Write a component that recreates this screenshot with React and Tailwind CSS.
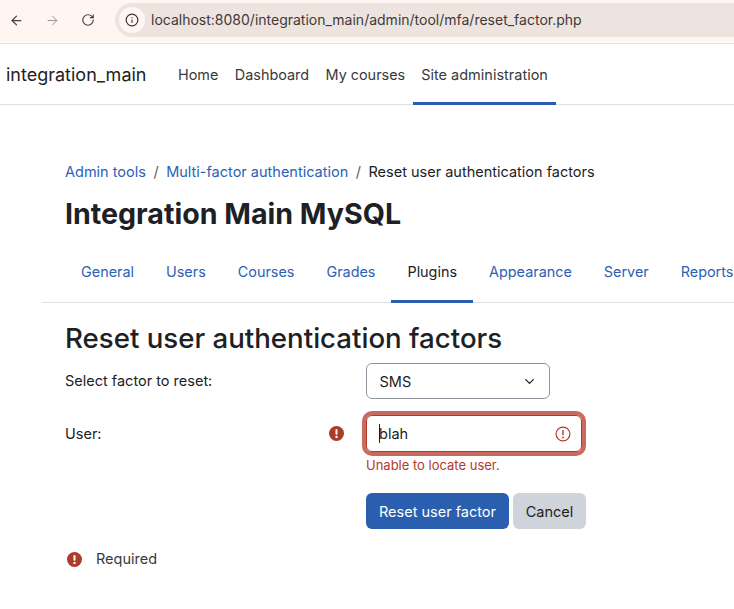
import React from "react";
import { ArrowLeft, ArrowRight, RotateCw, Info, ChevronDown } from "lucide-react";

function Bang({ className }) {
  return (
    <svg viewBox="0 0 16 16" className={className}>
      <circle cx="8" cy="8" r="8" fill="#ab3b2a" />
      <rect x="6.9" y="3.2" width="2.2" height="6" rx="1" fill="#fff" />
      <circle cx="8" cy="11.6" r="1.25" fill="#fff" />
    </svg>
  );
}

function BangOutline({ className }) {
  return (
    <svg viewBox="0 0 16 16" className={className}>
      <circle cx="8" cy="8" r="6.9" fill="none" stroke="#b3392a" strokeWidth="1.2" />
      <rect x="7.3" y="3.9" width="1.4" height="5.4" rx="0.6" fill="#b3392a" />
      <circle cx="8" cy="11.4" r="0.95" fill="#b3392a" />
    </svg>
  );
}

export default function App() {
  const tabs = ["General", "Users", "Courses", "Grades", "Plugins", "Appearance", "Server", "Reports"];
  return (
    <div className="w-[734px] h-[609px] overflow-hidden bg-white font-['Inter',sans-serif] text-[14.4px] text-[#1d2125]">
      <div className="h-[44px] bg-[#fff5f1] border-b border-[#f0dfd8] flex items-start">
        <div className="flex items-center h-[40px] pl-[9px] gap-[21px] text-[#4a423f]">
          <ArrowLeft size={15} strokeWidth={2} />
          <ArrowRight size={15} strokeWidth={1.6} className="text-[#9c9592]" />
          <RotateCw size={14} strokeWidth={2} />
        </div>
        <div className="ml-[20px] mt-[3px] flex-1 h-[34px] bg-[#eee4df] rounded-l-full flex items-center pl-[4px]">
          <div className="w-[26px] h-[26px] rounded-full bg-[#fff5f1] flex items-center justify-center text-[#3b3533]">
            <Info size={14} strokeWidth={2} />
          </div>
          <span className="ml-[6px] text-[14px] leading-none text-[#3f3a38]">localhost:8080/integration_main/admin/tool/mfa/reset_factor.php</span>
        </div>
      </div>

      <nav className="h-[61px] border-b border-[#dee2e6] flex items-stretch pl-[6px] whitespace-nowrap">
        <div className="flex items-center text-[18px] w-[166px]">integration_main</div>
        <div className="flex items-center px-[6px] pt-[1px] text-[#373a3c]">Home</div>
        <div className="flex items-center px-[10.5px] pt-[1px] text-[#373a3c]">Dashboard</div>
        <div className="flex items-center px-[6px] pt-[1px] text-[#373a3c]">My courses</div>
        <div className="flex items-center ml-[2px] pl-[8px] pr-[8px] pt-[3px] text-[14.5px] text-[#373a3c] border-b-[3px] border-[#2a5fb0] -mb-px">Site administration</div>
      </nav>

      <main className="pt-[57px]">
        <div className="pl-[65px] flex items-center h-[20px] text-[14.5px]">
          <span className="text-[#2a62b5]">Admin tools</span>
          <span className="mx-[7.5px] text-[#5a5f63]">/</span>
          <span className="text-[#2a62b5]">Multi-factor authentication</span>
          <span className="mx-[7.5px] text-[#5a5f63]">/</span>
          <span>Reset user authentication factors</span>
        </div>
        <h1 className="pl-[65px] mt-[14px] text-[28.6px] leading-[36px] font-bold">Integration Main MySQL</h1>

        <div className="ml-[42px] mt-[20px] h-[51px] border-b border-[#dee2e6] flex whitespace-nowrap">
          <div className="pl-[23px] flex">
            {tabs.map((t) => (
              <div
                key={t}
                className={
                  t === "Plugins"
                    ? "px-[16px] pt-[9px] h-[51px] border-b-[3px] border-[#2a5fb0] text-[#1d2125]"
                    : "px-[16px] pt-[9px] h-[51px] text-[#2a62b5]"
                }
              >
                {t}
              </div>
            ))}
          </div>
        </div>

        <h2 className="pl-[65px] mt-[17px] text-[27.65px] leading-[36px] font-medium">Reset user authentication factors</h2>

        <div className="pl-[65px] mt-[7px] text-[14.5px]">
          <div className="flex items-center h-[36px]">
            <label className="w-[301px]">Select factor to reset:</label>
            <div className="w-[184px] h-[36px] border border-[#8f959e] rounded-[6px] flex items-center justify-between pl-[12.5px] pr-[12px] pt-[1px]">
              <span>SMS</span>
              <ChevronDown size={15} strokeWidth={2} />
            </div>
          </div>

          <div className="flex items-center h-[37px] mt-[16px]">
            <label className="w-[264px]">User:</label>
            <Bang className="w-[15px] h-[15px]" />
            <div className="ml-[22px] w-[216px] h-[37px] border border-[#b3392a] rounded-[6px] ring-[4px] ring-[#c96a5e] flex items-center justify-between pl-[12px] pr-[10px]">
              <span className="relative">
                <span className="absolute left-0 top-[1px] bottom-[1px] w-px bg-[#1d2125]" />
                blah
              </span>
              <BangOutline className="w-[16px] h-[16px]" />
            </div>
          </div>

          <div className="pl-[301px] mt-[4px] text-[13px] leading-[18px] text-[#b3392a]">Unable to locate user.</div>

          <div className="pl-[301px] mt-[19px] flex gap-[4px]">
            <div className="h-[36px] w-[143px] pt-[1px] rounded-[6px] bg-[#2a5fb0] text-white flex items-center justify-center">Reset user factor</div>
            <div className="h-[36px] w-[73px] pt-[1px] rounded-[6px] bg-[#ced4da] flex items-center justify-center">Cancel</div>
          </div>

          <div className="flex items-center mt-[19px] h-[22px] pl-[2px]">
            <Bang className="w-[15px] h-[15px]" />
            <span className="ml-[14px] text-[#373a3c]">Required</span>
          </div>
        </div>
      </main>
    </div>
  );
}
